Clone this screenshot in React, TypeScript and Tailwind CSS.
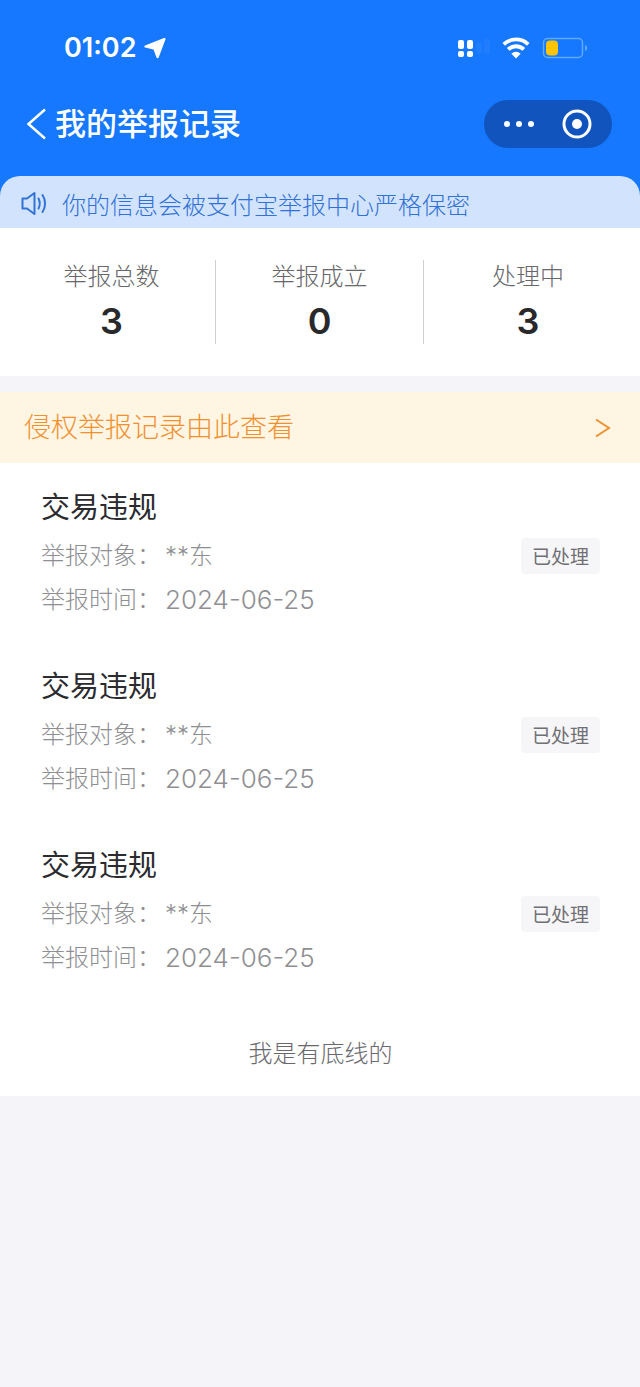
import React from 'react';

interface ReportRecord {
  id: number;
  title: string;
  target: string;
  date: string;
  status: string;
}

const stats = [
  { label: '举报总数', value: 3 },
  { label: '举报成立', value: 0 },
  { label: '处理中', value: 3 },
];

const records: ReportRecord[] = [
  { id: 1, title: '交易违规', target: '**东', date: '2024-06-25', status: '已处理' },
  { id: 2, title: '交易违规', target: '**东', date: '2024-06-25', status: '已处理' },
  { id: 3, title: '交易违规', target: '**东', date: '2024-06-25', status: '已处理' },
];

const StatusBar = () => (
  <div className="flex h-24 items-center justify-between pl-16 pr-13">
    <div className="flex items-center gap-2">
      <span className="text-[27px] font-semibold leading-8">01:02</span>
      <svg className="size-[22px]" viewBox="0 0 22 22" fill="currentColor" aria-hidden="true">
        <path d="M20 1 1 8.5c-1 .4-.9 1.900.1 2.100L9.500 12.500 12.500 20.500c.4 1 1.900 1 2.200 0L21.500 2.300C21.800 1.300 21 .6 20 1Z" />
      </svg>
    </div>
    <div className="flex items-center">
      {/* dual sim signal */}
      <svg className="h-5 w-9" viewBox="0 0 36 20" fill="currentColor" aria-hidden="true">
        <rect x="0" y="2" width="6" height="9" rx="2" />
        <rect x="9" y="2" width="6" height="9" rx="2" />
        <rect x="0" y="13" width="6" height="6" rx="2" />
        <rect x="9" y="13" width="6" height="6" rx="2" />
        <rect x="18" y="4" width="6" height="12" rx="2" opacity="0.05" />
        <rect x="26" y="1" width="6" height="15" rx="2" opacity="0.05" />
      </svg>
      <svg className="ml-2 h-[22px] w-7" viewBox="0 0 28 22" aria-hidden="true">
        <g fill="none" stroke="currentColor" strokeWidth="3.8">
          <path d="M1.8 7.4a17.5 17.5 0 0 1 24.4 0" />
          <path d="M6.2 12.4a11.2 11.2 0 0 1 15.6 0" />
        </g>
        <path d="M14 21.5 9.4 16.7a6.5 6.5 0 0 1 9.2 0Z" fill="currentColor" />
      </svg>
      <svg className="ml-3 h-[22px] w-[46px]" viewBox="0 0 46 22" aria-hidden="true">
        <rect x="1.5" y="1.5" width="39" height="19" rx="4" fill="none" stroke="#5eaafb" strokeWidth="1.5" />
        <rect x="4" y="3.5" width="12" height="15" rx="4" fill="#ffc400" />
        <path d="M43 8v6c1.6-.6 2.2-1.7 2.2-3S44.6 8.6 43 8Z" fill="#5eaafb" />
      </svg>
    </div>
  </div>
);

const NavBar = () => (
  <div className="flex h-14 items-center justify-between pl-6 pr-7">
    <div className="flex items-center">
      <button type="button" aria-label="返回" className="flex h-12 w-[31px] items-center">
        <svg className="h-8 w-6" viewBox="0 0 24 32" fill="none" stroke="currentColor" strokeWidth="2.5" aria-hidden="true">
          <path d="M21 1.5 4.5 16 21 30.5" />
        </svg>
      </button>
      <h1 className="text-[31px] font-medium leading-12">我的举报记录</h1>
    </div>
    <div className="flex h-12 w-32 items-center justify-between rounded-full bg-[#1254bd] pl-5 pr-[19px]">
      <button type="button" aria-label="更多">
        <svg className="h-8 w-[30px]" viewBox="0 0 30 32" fill="currentColor" aria-hidden="true">
          <circle cx="3" cy="16" r="3" />
          <circle cx="15" cy="16" r="3" />
          <circle cx="27" cy="16" r="3" />
        </svg>
      </button>
      <button type="button" aria-label="关闭">
        <svg className="size-8" viewBox="0 0 32 32" aria-hidden="true">
          <circle cx="16" cy="16" r="13" fill="none" stroke="currentColor" strokeWidth="3" />
          <circle cx="16" cy="16" r="5" fill="currentColor" />
        </svg>
      </button>
    </div>
  </div>
);

const RecordItem = ({ record }: { record: ReportRecord }) => (
  <li className="flex items-center justify-between">
    <div>
      <h2 className="text-[29px] leading-[52px] text-[#2b2b2f]">{record.title}</h2>
      <p className="flex gap-1 text-2xl font-light leading-[44px] text-[#8f8f93]">
        <span>举报对象：</span>
        <span>{record.target}</span>
      </p>
      <p className="flex gap-1 text-2xl font-light leading-[44px] text-[#8f8f93]">
        <span>举报时间：</span>
        <span className="text-[26px]">{record.date}</span>
      </p>
    </div>
    <span className="mt-2 rounded-sm bg-[#f6f5f8] px-[11px] pt-1 text-[19px] leading-8 text-[#707074]">{record.status}</span>
  </li>
);

export default function App() {
  return (
    <div className="min-h-screen bg-[#f5f4f9] font-['Inter','Noto_Sans_CJK_SC',sans-serif]">
      <header className="bg-[#1677ff] text-white">
        <StatusBar />
        <NavBar />
        <div className="pt-6">
          <div className="flex h-[52px] items-center gap-3 rounded-t-[20px] bg-[#d2e4fd] px-5 pt-1 text-[#3272d6]">
            <svg className="h-[26px] w-[30px]" viewBox="0 0 30 26" fill="none" stroke="currentColor" strokeWidth="2" aria-hidden="true">
              <path d="M2.5 7.5H7L14.5 2v21L7 17.5H2.5Z" strokeLinejoin="round" />
              <path d="M18.5 7.5c1.5 3 1.5 7 0 10M22.5 4c3.4 5 3.4 12 0 17" strokeLinecap="round" />
            </svg>
            <p className="pt-1 text-2xl font-light leading-9">你的信息会被支付宝举报中心严格保密</p>
          </div>
        </div>
      </header>

      <main>
        <section className="grid grid-cols-3 divide-x divide-[#cfcfd3] bg-white px-2 py-8">
          {stats.map(stat => (
            <div key={stat.label} className="flex h-[84px] flex-col items-center">
              <p className="pt-px text-2xl font-light leading-8 text-[#68686c]">{stat.label}</p>
              <p className="text-4xl font-semibold leading-[56px] text-[#29292c]">{stat.value}</p>
            </div>
          ))}
        </section>

        <a href="#infringement" className="mt-4 flex h-[71px] items-center justify-between bg-[#fff5e3] pl-6 pr-7 text-[#f0902f]">
          <span className="text-[27px] font-light leading-10">侵权举报记录由此查看</span>
          <svg className="h-5 w-[18px]" viewBox="0 0 18 20" fill="none" stroke="currentColor" strokeWidth="2" aria-hidden="true">
            <path d="M2 1.5 15 10 2 18.5" />
          </svg>
        </a>

        <section className="bg-white pt-[19px] pr-10 pb-5 pl-[41px]">
          <ul className="space-y-[39px]">
            {records.map(record => (
              <RecordItem key={record.id} record={record} />
            ))}
          </ul>
          <p className="mt-[52px] text-center text-2xl font-light leading-[44px] text-[#69696d]">我是有底线的</p>
        </section>
      </main>
    </div>
  );
}
